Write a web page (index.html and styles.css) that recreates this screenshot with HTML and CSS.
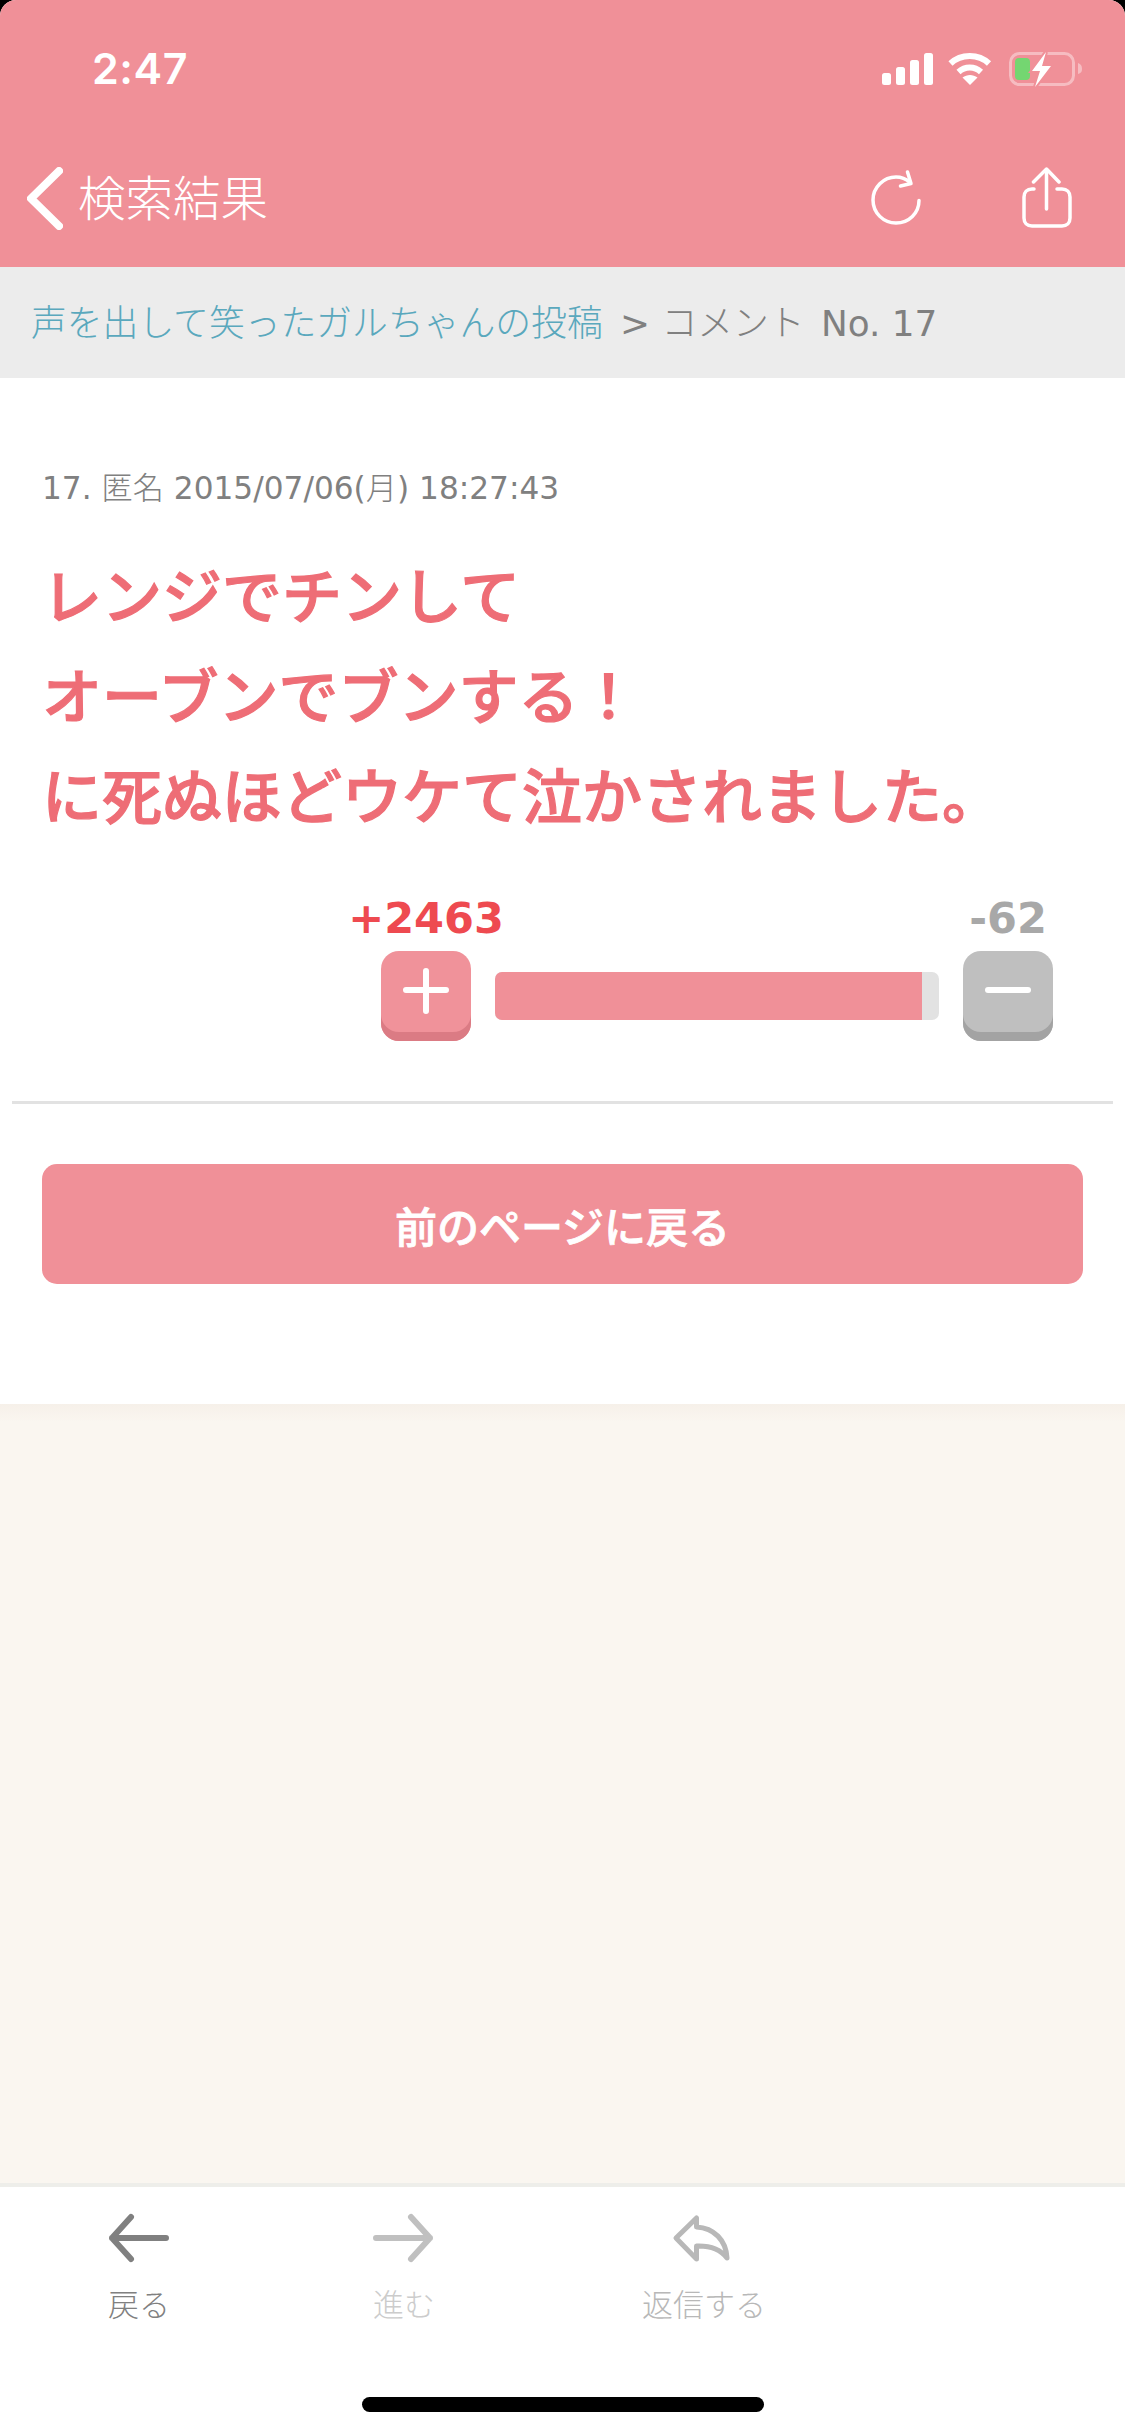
FILE: index.html
```html
<!DOCTYPE html>
<html lang="ja">
<head>
<meta charset="utf-8">
<title>コメント No. 17</title>
<link rel="stylesheet" href="styles.css">
</head>
<body>
<div class="app">
  <header class="header">
    <div class="status">
      <span class="time">2:47</span>
      <svg class="status-icons" width="204" height="36" viewBox="0 0 204 36">
        <g fill="#fff">
          <rect x="2" y="21" width="9" height="12" rx="2.5"/>
          <rect x="16" y="15" width="9" height="18" rx="2.5"/>
          <rect x="30" y="8" width="9" height="25" rx="2.5"/>
          <rect x="44" y="1" width="9" height="32" rx="2.5"/>
        </g>
        <g fill="none" stroke="#fff" stroke-width="6">
          <path d="M70.5 11.5C81 1.5 98.500 1.500 109 11.500"/>
          <path d="M78.500 20C85 14 94.500 14 101 20"/>
        </g>
        <path d="M90 33L82.500 25.500C87 22 93 22 97.500 25.500Z" fill="#fff"/>
        <rect x="130.500" y="1.500" width="63" height="31" rx="9" fill="none" stroke="#fff" stroke-opacity=".4" stroke-width="3"/>
        <path d="M198 11C201 12 202 14 202 17C202 20 201 21 198 22Z" fill="#fff" fill-opacity=".4"/>
        <rect x="135" y="6" width="15" height="22" rx="4" fill="#74d671"/>
        <path d="M166 0L152 19H160L155 35L171 14H162Z" fill="#fff" stroke="#f09098" stroke-width="4" paint-order="stroke"/>
      </svg>
    </div>
    <nav class="nav">
      <svg class="chevron" width="36" height="63" viewBox="0 0 36 63">
        <path d="M32 4L4 31.500L32 59" fill="none" stroke="#fff" stroke-width="8" stroke-linecap="round" stroke-linejoin="round"/>
      </svg>
      <span class="nav-title">検索結果</span>
      <div class="nav-actions">
        <svg width="56" height="64" viewBox="0 0 56 64">
          <g fill="none" stroke="#fff" stroke-width="3.500" stroke-linecap="round" stroke-linejoin="round">
            <path d="M50 33.500C50 46 40 56 27 56C14.500 56 4 46 4 33C4 20.500 14.500 10 27 10C31 10 36 11 41 15.500"/>
            <path d="M38.500 5L42 16.500L31.500 19"/>
          </g>
        </svg>
        <svg width="56" height="64" viewBox="0 0 56 64">
          <g fill="none" stroke="#fff" stroke-width="3.500" stroke-linecap="round" stroke-linejoin="round">
            <path d="M15 22H13C8 22 5 25 5 30V51C5 56 8 59 13 59H43C48 59 51 56 51 51V30C51 25 48 22 43 22H38"/>
            <path d="M27.500 3V42"/>
            <path d="M14.500 15L27.500 2L40 15"/>
          </g>
        </svg>
      </div>
    </nav>
  </header>

  <div class="crumbs"><a class="crumb-link ja">声を出して笑ったガルちゃんの投稿</a><span> &gt; <span class="ja crumb-current">コメント</span> No. 17</span></div>

  <section class="content">
    <p class="meta">17. <span class="ja">匿名</span> 2015/07/06(<span class="ja">月</span>) 18:27:43</p>
    <p class="comment">レンジでチンして<br>オーブンでブンする！<br>に死ぬほどウケて泣かされました。</p>
    <div class="vote">
      <span class="count count-plus">+2463</span>
      <span></span>
      <span class="count count-minus">-62</span>
      <div class="vote-btn vote-plus">
        <svg width="48" height="46" viewBox="0 0 48 46"><path d="M24 3V43M4 22H44" fill="none" stroke="#fff" stroke-width="6" stroke-linecap="round"/></svg>
      </div>
      <div class="bar"><div class="bar-fill" style="width:96.2%"></div></div>
      <div class="vote-btn vote-minus">
        <svg width="48" height="46" viewBox="0 0 48 46"><path d="M4 22H44" fill="none" stroke="#fff" stroke-width="6" stroke-linecap="round"/></svg>
      </div>
    </div>
    <hr class="divider">
    <div class="back-btn">前のページに戻る</div>
  </section>

  <main class="filler"></main>

  <footer class="tabbar">
    <div class="tabs">
      <div class="tab tab-back">
        <svg width="60" height="52" viewBox="0 0 60 52"><path d="M22 5L3 26L22 47M3 26H57" fill="none" stroke="#808080" stroke-width="6" stroke-linecap="round" stroke-linejoin="round"/></svg>
        <span>戻る</span>
      </div>
      <div class="tab tab-forward">
        <svg width="60" height="52" viewBox="1 0 60 52"><path d="M38 5L57 26L38 47M57 26H3" fill="none" stroke="#c0c0c0" stroke-width="6" stroke-linecap="round" stroke-linejoin="round"/></svg>
        <span>進む</span>
      </div>
      <div class="tab tab-reply">
        <svg width="60" height="52" viewBox="4 0 60 52"><path d="M6 26L26.500 6V15C44 16 56 28 57 46C51 38 40 33.500 26.500 34V47Z" fill="none" stroke="#b8b8b8" stroke-width="5" stroke-linejoin="round"/></svg>
        <span>返信する</span>
      </div>
    </div>
    <div class="home-indicator"></div>
  </footer>
</div>
</body>
</html>
```
FILE: styles.css
```css
* { box-sizing: border-box; }

html, body {
  margin: 0;
  padding: 0;
  background: #000;
}

body {
  font-family: "DejaVu Sans", "Noto Sans CJK JP", sans-serif;
}

.ja {
  font-family: "Noto Sans CJK JP", sans-serif;
  font-weight: 300;
}

.app {
  width: 1125px;
  height: 2436px;
  display: flex;
  flex-direction: column;
  overflow: hidden;
  border-radius: 16px 16px 0 0;
  background: #fff;
}

.header {
  background: #f09098;
  color: #fff;
  flex: none;
}

.status {
  height: 130px;
  display: flex;
  align-items: flex-start;
  justify-content: space-between;
  padding: 52px 41px 0 92px;
}

.time {
  font-family: Inter, sans-serif;
  font-size: 43px;
  font-weight: 600;
  line-height: 32px;
  letter-spacing: 0.5px;
}

.status-icons {
  display: block;
}

.nav {
  height: 137px;
  display: flex;
  align-items: center;
  padding: 0 50px 0 27px;
}

.chevron {
  display: block;
}

.nav-title {
  font-family: "Noto Sans CJK JP", sans-serif;
  font-size: 47.500px;
  font-weight: 300;
  line-height: 60px;
  margin: 0 0 6px 15px;
}

.nav-actions {
  margin-left: auto;
  display: flex;
  gap: 94px;
}

.crumbs {
  flex: none;
  height: 111px;
  display: flex;
  align-items: center;
  gap: 6px;
  padding: 0 0 5px 31px;
  background: #ececec;
  color: #808080;
  font-size: 35.800px;
  white-space: pre;
}

.crumb-link {
  color: #5aa8bd;
}

.crumb-current {
  margin-right: 5px;
}

.content {
  flex: none;
  background: #fff;
}

.meta {
  margin: 86px 0 0 42px;
  color: #808080;
  font-size: 31.200px;
  line-height: 44px;
}

.comment {
  margin: 38px 0 0 42px;
  color: #ee6d76;
  font-size: 60px;
  font-weight: 500;
  line-height: 100px;
  -webkit-text-stroke: 1.200px #ee6d76;
}

.vote {
  margin: 49px 0 0 381px;
  display: grid;
  grid-template-columns: 90px 444px 90px;
  column-gap: 24px;
  row-gap: 12px;
  align-items: center;
}

.count {
  justify-self: center;
  font-size: 43px;
  font-weight: 700;
  line-height: 42px;
  white-space: nowrap;
}

.count-plus { color: #ee4a50; }
.count-minus { color: #a8a8a8; }

.vote-btn {
  height: 90px;
  border-radius: 18px;
  display: flex;
  align-items: center;
  justify-content: center;
  padding-bottom: 11px;
}

.vote-plus {
  background: #f0929a;
  box-shadow: inset 0 -9px 0 #db7b84;
}

.vote-minus {
  background: #bfbfbf;
  box-shadow: inset 0 -9px 0 #a3a3a3;
}

.bar {
  height: 48px;
  border-radius: 7px;
  background: #e2e2e2;
  overflow: hidden;
}

.bar-fill {
  height: 100%;
  background: #f09098;
}

.divider {
  margin: 60px 12px 0;
  height: 3px;
  border: 0;
  background: #e2e2e2;
}

.back-btn {
  margin: 60px 42px 120px;
  height: 120px;
  border-radius: 15px;
  background: #f09098;
  color: #fff;
  font-size: 42px;
  font-weight: 500;
  -webkit-text-stroke: 0.800px #fff;
  display: flex;
  align-items: center;
  justify-content: center;
}

.filler {
  flex: 1;
  background: linear-gradient(#f6f0e9, #faf6f0 18px);
}

.tabbar {
  flex: none;
  height: 253px;
  border-top: 4px solid #eeeeea;
  background: #fff;
  padding-top: 25px;
  display: flex;
  flex-direction: column;
}

.tabs {
  display: flex;
  gap: 203px;
  padding-left: 108px;
}

.tab {
  display: flex;
  flex-direction: column;
  align-items: center;
  gap: 19px;
  font-family: "Noto Sans CJK JP", sans-serif;
  font-size: 31px;
  font-weight: 300;
  line-height: 40px;
  white-space: nowrap;
}

.tab svg {
  display: block;
  overflow: visible;
}

.tab-back { color: #808080; }
.tab-forward { color: #cccccc; }
.tab-reply {
  color: #b8b8b8;
  margin-left: 4px;
}

.home-indicator {
  width: 402px;
  height: 15px;
  margin: 74px auto 0;
  border-radius: 8px;
  background: #000;
}
```
